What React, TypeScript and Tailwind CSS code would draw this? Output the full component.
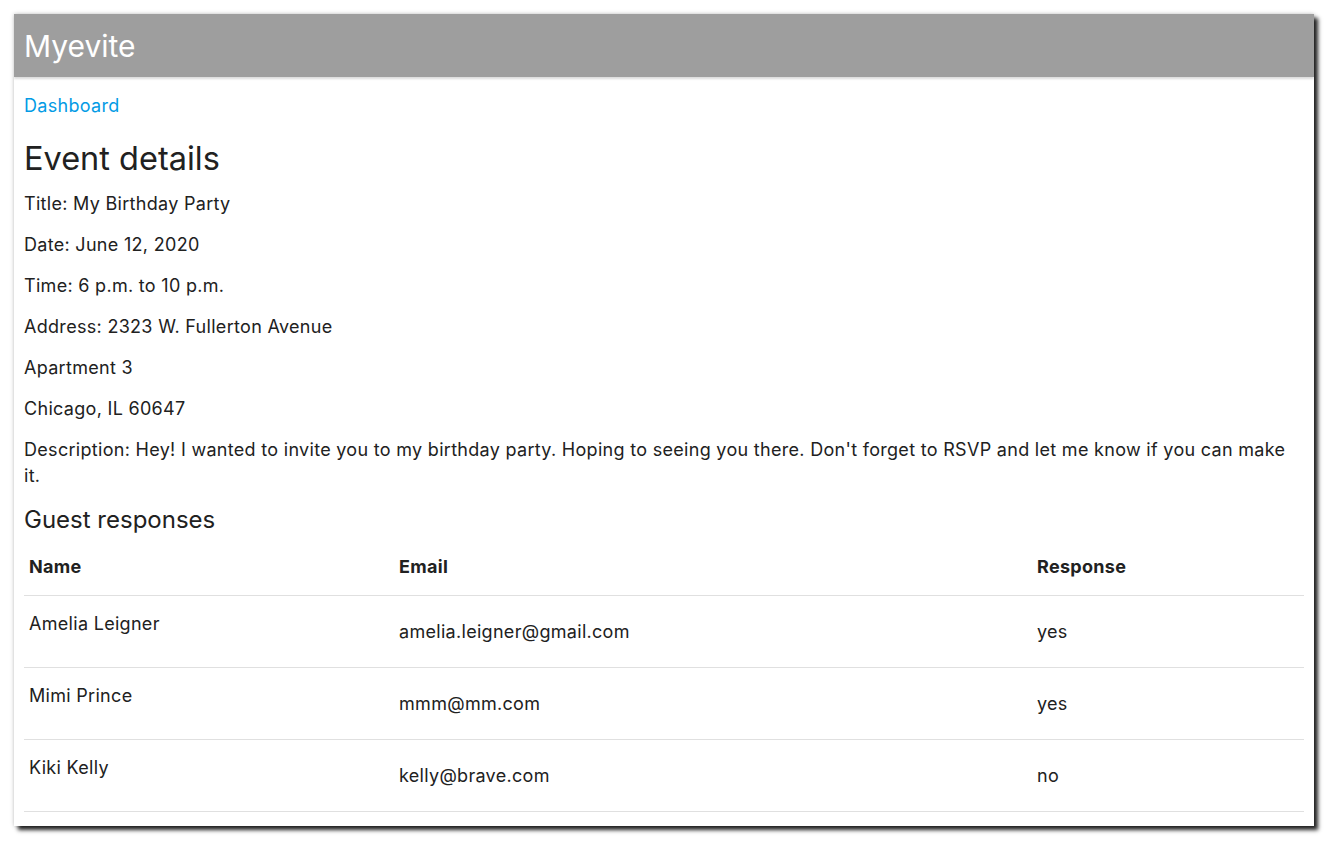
export default function App() {
  const guests = [
    { name: "Amelia Leigner", email: "amelia.leigner@gmail.com", response: "yes" },
    { name: "Mimi Prince", email: "mmm@mm.com", response: "yes" },
    { name: "Kiki Kelly", email: "kelly@brave.com", response: "no" },
  ];

  return (
    <div className="min-h-screen bg-white pt-[14px] pl-[14px] font-['Inter',sans-serif] text-[#212121]">
      <div className="w-[1300px] h-[812px] overflow-hidden bg-white shadow-[4px_4px_4px_rgba(0,0,0,0.85),0_0_4px_rgba(0,0,0,0.25)]">
        <nav className="h-[63px] bg-[#9e9e9e] px-[10px] flex items-center shadow-[0_2px_2px_rgba(0,0,0,0.14)]">
          <span className="text-white text-[30px] leading-none">Myevite</span>
        </nav>

        <main className="px-[10px] text-[18px] tracking-[0.3px]">
          <a href="#" className="block mt-[16px] leading-[26px] text-[#039be5]">
            Dashboard
          </a>

          <h4 className="mt-[21px] text-[32.5px] leading-[37px] tracking-normal">Event details</h4>

          <div className="mt-[14px] leading-[26px] flex flex-col gap-[15px]">
            <p>Title: My Birthday Party</p>
            <p>Date: June 12, 2020</p>
            <p>Time: 6 p.m. to 10 p.m.</p>
            <p>Address: 2323 W. Fullerton Avenue</p>
            <p>Apartment 3</p>
            <p>Chicago, IL 60647</p>
            <p>
              Description: Hey! I wanted to invite you to my birthday party. Hoping to seeing you there. Don't
              forget to RSVP and let me know if you can make it.
            </p>
          </div>

          <h5 className="mt-[17px] text-[24px] leading-[27px] tracking-normal">Guest responses</h5>

          <table className="mt-[6px] w-full border-collapse leading-[26px]">
            <thead>
              <tr className="border-b border-[#e0e0e0]">
                <th className="w-[370px] px-[5px] py-[15px] text-left font-bold">Name</th>
                <th className="w-[638px] px-[5px] py-[15px] text-left font-bold">Email</th>
                <th className="px-[5px] py-[15px] text-left font-bold">Response</th>
              </tr>
            </thead>
            <tbody>
              {guests.map((g) => (
                <tr key={g.email} className="h-[72px] border-b border-[#e0e0e0]">
                  <td className="px-[5px] pt-[15px] pb-[30px] align-top">{g.name}</td>
                  <td className="px-[5px] align-middle">{g.email}</td>
                  <td className="px-[5px] align-middle">{g.response}</td>
                </tr>
              ))}
            </tbody>
          </table>
        </main>
      </div>
    </div>
  );
}
